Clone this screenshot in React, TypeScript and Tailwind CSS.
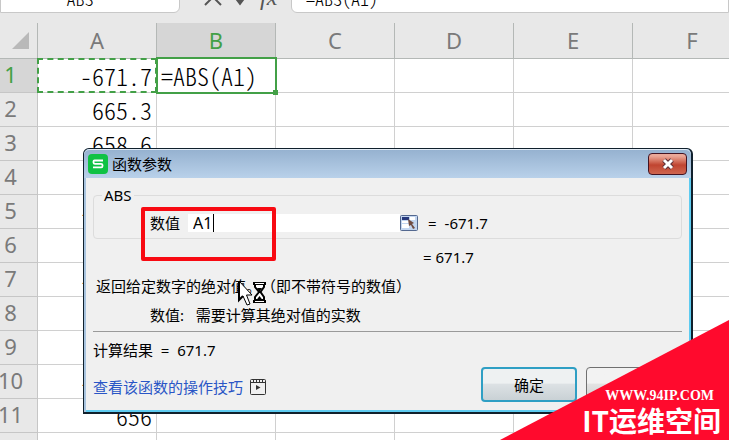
import { useState } from 'react';

const columns = ['A', 'B', 'C', 'D', 'E', 'F'];

const values = ['-671.7', '665.3', '658.6', '662.1', '-659.4', '661.8', '-657.2', '660.5', '663.9', '-658.3', '656', ''];

function FormulaBar() {
  return (
    <div className="flex -mt-4 mb-[10px] h-[29px] text-lg leading-6 font-light text-black">
      <input
        aria-label="Name box"
        defaultValue="ABS"
        className="w-[180px] h-full pr-5 pb-0.5 bg-white border border-[#c8c8c8] rounded-br-md text-center outline-none font-['Noto_Sans_CJK_SC',sans-serif] [font-feature-settings:'hwid']"
      />
      <div className="flex items-center gap-[10px] pl-6 pb-1 w-[111px] text-[#555]">
        <button aria-label="Cancel">
          <svg width="18" height="20" viewBox="0 0 18 20" fill="none" stroke="currentColor" strokeWidth="2" aria-hidden="true">
            <path d="M1 2L17 18M17 2L1 18" />
          </svg>
        </button>
        <button aria-label="Enter">
          <svg width="18" height="20" viewBox="0 0 18 20" fill="none" stroke="currentColor" strokeWidth="3" aria-hidden="true">
            <path d="M2 8L8 16L17 4" />
          </svg>
        </button>
        <button aria-label="Insert function" className="font-['Liberation_Serif',serif] italic text-2xl leading-6">fx</button>
      </div>
      <input
        aria-label="Formula"
        defaultValue="=ABS(A1)"
        className="flex-1 min-w-0 h-full pl-[14px] pb-0.5 bg-white border border-[#c8c8c8] rounded-bl-md outline-none font-['Noto_Sans_CJK_SC',sans-serif] [font-feature-settings:'hwid']"
      />
    </div>
  );
}

function Sheet() {
  return (
    <table className="table-fixed border-separate border-spacing-0 w-[767px] -ml-4 font-['Noto_Sans',sans-serif] text-[22px] leading-7">
      <thead>
        <tr className="h-9">
          <th className="w-[54px] p-0 border-r border-b border-[#b4b8b6]">
            <svg width="17" height="17" viewBox="0 0 17 17" className="ml-7" aria-hidden="true">
              <path d="M17 0V17H0Z" fill="#b9b9b9" />
            </svg>
          </th>
          {columns.map(c => (
            <th
              key={c}
              scope="col"
              className={`w-[119px] p-0 pb-0.5 border-r border-b border-[#b4b8b6] font-normal ${c === 'B' ? 'bg-[#d6d6d6] text-[#43a047]' : 'text-[#7a7a7a]'}`}
            >
              {c}
            </th>
          ))}
        </tr>
      </thead>
      <tbody>
        {values.map((value, i) => (
          <tr key={i} className="h-[34px]">
            <th
              scope="row"
              className={`p-0 pb-[3px] border-r border-b border-[#c6c6c6] font-normal ${i === 0 ? 'bg-[#d6d6d6] text-[#43a047]' : 'text-[#7a7a7a]'}`}
            >
              {i + 1}
            </th>
            {columns.map(c => (
              <td
                key={c}
                className="relative p-0 px-1 bg-white border-r border-b border-[#d0d0d0] text-black text-2xl leading-8 font-light font-['Noto_Sans_CJK_SC',sans-serif] [font-feature-settings:'hwid']"
              >
                {c === 'A' && <div className="text-right">{value}</div>}
                {c === 'B' && i === 0 && '=ABS(A1)'}
                {c === 'A' && i === 0 && <div className="absolute -inset-px border-2 border-dashed border-[#43a047]" />}
                {c === 'B' && i === 0 && (
                  <div className="absolute z-10 -top-0.5 -left-px -right-0.5 -bottom-0.5 border-2 border-[#43a047]">
                    <div className="absolute -right-[3px] -bottom-[3px] size-[5px] bg-[#43a047]" />
                  </div>
                )}
              </td>
            ))}
          </tr>
        ))}
      </tbody>
    </table>
  );
}

function WpsLogo() {
  return (
    <svg width="20" height="20" viewBox="0 0 20 20" aria-hidden="true">
      <rect width="20" height="20" rx="4" fill="#0fc244" />
      <path d="M15 6.5H6.5Q5.5 6.5 5.5 7.5V8.5Q5.5 9.8 7 9.8H13Q14.5 9.8 14.5 11V12Q14.5 13.3 13.3 13.3H5" fill="none" stroke="#fff" strokeWidth="1.8" />
    </svg>
  );
}

function PickerIcon() {
  return (
    <svg width="18" height="16" viewBox="0 0 18 16" aria-hidden="true">
      <rect x="0.5" y="0.5" width="17" height="15" rx="1" fill="#c3d6f0" stroke="#53688f" />
      <path d="M2 2H9V5H2Z" fill="#26387c" />
      <path d="M2 6H9V8H2ZM2 9H9V13H2ZM10 2H15V5H10Z" fill="#fff" />
      <path d="M8 4L14 8L12 9L15 13L13 14L11 10L9 11Z" fill="#704c42" />
    </svg>
  );
}

function VideoIcon() {
  return (
    <svg width="16" height="16" viewBox="0 0 16 16" fill="none" stroke="#333" aria-hidden="true">
      <rect x="0.5" y="0.5" width="15" height="15" rx="1" />
      <path d="M1 3.5H15M3.5 1V3.5M6.5 1V3.5M9.5 1V3.5M12.5 1V3.5" />
      <path d="M6 6L10.5 8.5L6 11Z" fill="#333" stroke="none" />
    </svg>
  );
}

function BusyCursor() {
  return (
    <svg width="32" height="28" viewBox="0 0 32 28" className="absolute left-[153px] top-[131px]" aria-hidden="true">
      <path d="M2 1V20L6 16L10 25L13 24L9.5 15H15Z" fill="#fff" stroke="#000" />
      <path d="M2 1V20L6 16" fill="none" stroke="#000" strokeWidth="2" />
      <path d="M18 4V7L22 12L18 17V20H27V17L23.5 12L27 7V4Z" fill="#fff" stroke="#000" strokeWidth="2" />
      <path d="M16 3.5H29M16 21.5H29" stroke="#000" strokeWidth="3" />
      <path d="M18 3.5H27M18 21.5H27" stroke="#fff" />
      <path d="M20 8H25L22.5 12ZM19.5 20L22.5 16L25.5 20Z" fill="#000" />
    </svg>
  );
}

function ArgumentsDialog() {
  const [arg, setArg] = useState('A1');

  return (
    <div
      role="dialog"
      aria-label="函数参数"
      className="absolute z-20 left-[83px] right-[36px] top-[148px] border border-[#10202c] border-b-2 border-r-2 rounded-t-md bg-[#a9c4df] text-black text-[15px] leading-5 font-['Noto_Sans','Noto_Sans_CJK_SC',sans-serif]"
    >
      {/* Title bar */}
      <div className="flex items-center gap-1 h-[29px] pl-1 pr-1 rounded-t-md border-t border-white/60 bg-linear-to-b from-[#96b2d0] to-[#b9d1ea]">
        <WpsLogo />
        <span className="flex-1">函数参数</span>
        <button
          aria-label="Close"
          className="flex items-center justify-center w-[39px] h-[22px] border border-[#431422] rounded-sm bg-linear-to-b from-[#eba898] from-10% via-[#c04430] via-55% to-[#cf6650]"
        >
          <svg width="14" height="12" viewBox="0 0 14 12" aria-hidden="true">
            <path d="M3 2L11 10M11 2L3 10" stroke="#5c3038" strokeWidth="5" />
            <path d="M3 2L11 10M11 2L3 10" stroke="#fff" strokeWidth="3" />
          </svg>
        </button>
      </div>

      <div className="ml-0.5 px-[7px] pt-[7px] pb-2 bg-[#f0f0f0] border-r-2 border-b-2 border-[#5ecbf0]">
        <fieldset className="h-[54px] px-2 border border-[#dcdcdc] rounded-sm">
          <legend className="px-0.5">ABS</legend>
          <div className="flex items-center h-9 pl-12">
            <label htmlFor="arg" className="w-[38px]">数值</label>
            <div className="relative flex w-[212px] h-[18px]">
              <input
                id="arg"
                value={arg}
                onChange={e => setArg(e.target.value)}
                className="peer w-full px-[5px] bg-white text-base outline-none"
              />
              {/* Resting caret, replaced by the real one on focus */}
              <span className="absolute left-[25px] inset-y-0 w-px bg-black pointer-events-none peer-focus:hidden" />
            </div>
            <button aria-label="Select range"><PickerIcon /></button>
            <span className="pl-[10px]">=</span>
            <span className="pl-2">-671.7</span>
          </div>
        </fieldset>

        <p className="pl-[330px] mt-2">=&nbsp;671.7</p>
        <p className="pl-[3px] mt-[9px] [text-spacing-trim:space-all]">返回给定数字的绝对值。（即不带符号的数值）</p>
        <p className="pl-[57px] mt-[9px]">数值:&nbsp;&nbsp; 需要计算其绝对值的实数</p>
        <hr className="mt-1.5 border-[#9a9a9a]" />
        <p className="mt-2">计算结果&nbsp; =&nbsp; 671.7</p>

        <div className="flex items-center mt-[7px]">
          <a href="#tips" className="pt-1 text-[#2a56c6]">查看该函数的操作技巧</a>
          <span className="flex-1 pl-[7px] pt-1"><VideoIcon /></span>
          <button className="w-24 h-[35px] border-2 border-[#2f9fc4] rounded-sm bg-linear-to-b from-[#eef1f2] from-45% via-[#dce1e4] via-50% to-[#c9d1d5]">确定</button>
          <button className="w-24 h-[35px] ml-[9px] border border-[#707070] rounded-sm bg-linear-to-b from-[#f2f2f2] from-45% via-[#e2e2e2] via-50% to-[#cfcfcf]">取消</button>
        </div>
      </div>

      {/* Highlight around the argument field */}
      <div className="absolute left-[57px] top-[58px] w-[135px] h-[54px] border-4 border-[#f80a12] rounded-xs pointer-events-none" />
      <BusyCursor />
    </div>
  );
}

function CornerRibbon() {
  return (
    <div className="absolute z-30 right-0 bottom-0 w-[229px] h-[120px] flex flex-col items-end justify-end bg-[#ff0a2d] text-white [clip-path:polygon(0_100%,100%_0,100%_100%)]">
      <span className="pr-[15px] text-sm leading-4 font-bold font-['Liberation_Serif',serif]">WWW.94IP.COM</span>
      <span className="pr-2 pb-1 text-[28px] leading-8 font-bold font-['Noto_Sans_CJK_SC',sans-serif]">IT运维空间</span>
    </div>
  );
}

export default function App() {
  return (
    <div className="relative h-screen overflow-hidden bg-[#e8e8e8]">
      <FormulaBar />
      <Sheet />
      <ArgumentsDialog />
      <CornerRibbon />
    </div>
  );
}
